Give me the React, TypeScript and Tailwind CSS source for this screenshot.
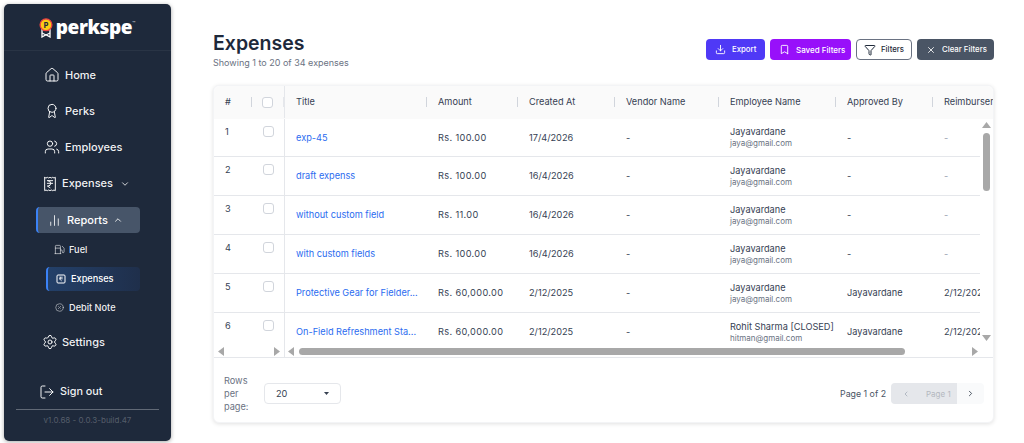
import React from 'react';
import {
  House,
  Award,
  Users,
  ReceiptIndianRupee,
  ChartNoAxesColumn,
  ChevronDown,
  ChevronUp,
  ChevronLeft,
  ChevronRight,
  Fuel,
  CirclePercent,
  Settings,
  LogOut,
  Download,
  Bookmark,
  Funnel,
  X,
} from 'lucide-react';

const rows = [
  { n: 1, title: 'exp-45', amount: 'Rs. 100.00', date: '17/4/2026', emp: 'Jayavardane', mail: 'jaya@gmail.com', by: '-', re: '-', h: 'h-[38px]' },
  { n: 2, title: 'draft expenss', amount: 'Rs. 100.00', date: '16/4/2026', emp: 'Jayavardane', mail: 'jaya@gmail.com', by: '-', re: '-', h: 'h-[39px]' },
  { n: 3, title: 'without custom field', amount: 'Rs. 11.00', date: '16/4/2026', emp: 'Jayavardane', mail: 'jaya@gmail.com', by: '-', re: '-', h: 'h-[39px]' },
  { n: 4, title: 'with custom fields', amount: 'Rs. 100.00', date: '16/4/2026', emp: 'Jayavardane', mail: 'jaya@gmail.com', by: '-', re: '-', h: 'h-[39px]' },
  { n: 5, title: 'Protective Gear for Fielder...', amount: 'Rs. 60,000.00', date: '2/12/2025', emp: 'Jayavardane', mail: 'jaya@gmail.com', by: 'Jayavardane', re: '2/12/2025', h: 'h-[39px]' },
  { n: 6, title: 'On-Field Refreshment Sta...', amount: 'Rs. 60,000.00', date: '2/12/2025', emp: 'Rohit Sharma [CLOSED]', mail: 'hitman@gmail.com', by: 'Jayavardane', re: '2/12/2025', h: 'h-[39px]' },
];

const heads = [
  { label: 'Title', w: 'w-[142px]' },
  { label: 'Amount', w: 'w-[91px]' },
  { label: 'Created At', w: 'w-[97px]' },
  { label: 'Vendor Name', w: 'w-[104px]' },
  { label: 'Employee Name', w: 'w-[117px]' },
  { label: 'Approved By', w: 'w-[97px]' },
  { label: 'Reimbursement', w: 'w-[120px]' },
];

function Logo() {
  return (
    <div className="flex items-center justify-center h-[47px] border-b border-white/5 pr-[1px]">
      <svg width="14" height="20" viewBox="0 0 14 20" className="mr-[3px] mt-[1px]">
        <path d="M3 11v8l4-2.200L11 19v-8z" fill="#1e293b" stroke="#fff" strokeWidth="1.300" />
        <path d="M3 15l4 2 4-2" fill="none" stroke="#fff" strokeWidth="1.100" />
        <circle cx="7" cy="6.800" r="5.900" fill="#facc15" stroke="#ef4444" strokeWidth="1.300" />
        <text x="7" y="9.500" textAnchor="middle" fontSize="7" fontWeight="800" fill="#1e293b" fontFamily="Inter, sans-serif">P</text>
      </svg>
      <span className="text-[19px] font-extrabold text-white tracking-[-0.4px] leading-none font-['Open_Sans',sans-serif]">perkspe</span>
      <span className="text-[5px] text-white/80 self-start mt-[17px] leading-none">™</span>
    </div>
  );
}

function NavItem({ icon, label, className }: { icon: React.ReactNode; label: string; className: string }) {
  return (
    <div className={`flex items-center text-[11px] font-medium text-white/95 ${className}`}>
      {icon}
      {label}
    </div>
  );
}

function Sidebar() {
  return (
    <aside className="w-[167px] h-[437px] shrink-0 m-[4px] rounded-[5px] bg-[#1e293b] shadow-[0_1px_4px_rgba(0,0,0,0.35)] flex flex-col">
      <Logo />
      <nav className="flex flex-col mt-[6px]">
        <NavItem className="h-[36px] pl-[40px] gap-[5px]" icon={<House size={16} strokeWidth={1.500} />} label="Home" />
        <NavItem className="h-[36px] pl-[40px] gap-[5px]" icon={<Award size={16} strokeWidth={1.500} />} label="Perks" />
        <NavItem className="h-[36px] pl-[40px] gap-[5px]" icon={<Users size={16} strokeWidth={1.500} />} label="Employees" />
        <div className="flex items-center h-[37px] pl-[38px] gap-[4px] text-[11px] font-medium text-white/95">
          <ReceiptIndianRupee size={16} strokeWidth={1.500} />
          Expenses
          <ChevronDown size={10} className="ml-[3px]" />
        </div>
        <div className="flex items-center h-[26px] ml-[32px] mr-[31px] mt-[5px] rounded-[4px] bg-[#475569] border-l-[2px] border-[#3b82f6] pl-[10px] text-[11px] font-medium text-white">
          <ChartNoAxesColumn size={13} strokeWidth={1.500} className="mr-[6px]" />
          Reports
          <ChevronUp size={10} className="ml-[5px]" />
        </div>
        <div className="flex items-center h-[29px] mt-[2px] pl-[50px] gap-[4px] text-[9.200px] font-medium text-white/95">
          <Fuel size={11} strokeWidth={1.300} />
          Fuel
        </div>
        <div className="flex items-center h-[24px] mt-[3px] mb-[2px] ml-[42px] mr-[31px] pl-[8px] gap-[5px] rounded-[4px] border-l-[2px] border-[#3b82f6] bg-gradient-to-r from-[#234069] to-[#1f2f4b] text-[9.200px] font-medium text-white">
          <svg width="10" height="10" viewBox="0 0 10 10" fill="none" stroke="currentColor" strokeWidth="1">
            <rect x="1" y="1" width="8" height="8" rx="1" />
            <path d="M3.200 3.200h3.600M3.200 4.800h3.600M4 3.200c1.600 0 1.600 1.600 0 1.600h-.600L5.800 7" strokeWidth="0.700" />
          </svg>
          Expenses
        </div>
        <div className="flex items-center h-[29px] pl-[51px] gap-[5px] text-[9.200px] font-medium text-white/95">
          <CirclePercent size={9} strokeWidth={1.300} />
          Debit Note
        </div>
        <NavItem className="h-[36px] mt-[2px] pl-[38px] gap-[4px]" icon={<Settings size={16} strokeWidth={1.500} />} label="Settings" />
      </nav>
      <div className="mt-auto px-[12px] pb-[15px]">
        <div className="flex items-center h-[26px] pl-[23px] gap-[5px] text-[10.800px] font-medium text-white/95">
          <LogOut size={16} strokeWidth={1.500} />
          Sign out
        </div>
        <div className="border-t border-white/30 mt-[4px] pt-[4px] text-center text-[8px] text-white/25">v1.0.68 - 0.0.3-build.47</div>
      </div>
    </aside>
  );
}

function Actions() {
  return (
    <div className="flex items-center gap-[5px] text-[7.800px] font-medium mt-[9px]">
      <button className="flex items-center h-[21px] w-[59px] pl-[9px] gap-[6px] rounded-[4px] bg-[#4f39f6] text-white">
        <Download size={11} />
        Export
      </button>
      <button className="flex items-center h-[21px] w-[81px] pl-[9px] gap-[6px] rounded-[4px] bg-[#9810fa] text-white">
        <Bookmark size={11} />
        <span className="text-[8px]">Saved Filters</span>
      </button>
      <button className="flex items-center h-[21px] w-[56px] pl-[7px] gap-[5px] rounded-[4px] border border-gray-500 bg-white text-gray-800">
        <Funnel size={12} />
        Filters
      </button>
      <button className="flex items-center h-[21px] w-[77px] pl-[9px] gap-[6px] rounded-[4px] bg-[#4a5565] text-white">
        <X size={10} />
        Clear Filters
      </button>
    </div>
  );
}

function Checkbox() {
  return <div className="w-[11px] h-[11px] rounded-[3px] border border-gray-300 bg-white" />;
}

function Arrow({ dir }: { dir: 'left' | 'right' | 'up' | 'down' }) {
  const paths = {
    left: 'M6 0v9L0 4.500z',
    right: 'M0 0v9l6-4.500z',
    up: 'M0 6h9L4.500 0z',
    down: 'M0 0h9L4.500 6z',
  };
  const box = dir === 'left' || dir === 'right' ? { w: 6, h: 9 } : { w: 9, h: 6 };
  return (
    <svg width={box.w} height={box.h} viewBox={`0 0 ${box.w} ${box.h}`} className="shrink-0">
      <path d={paths[dir]} fill="#a8a8a8" />
    </svg>
  );
}

function ExpenseTable() {
  return (
    <div className="relative h-[272px] overflow-hidden border-b border-gray-200 rounded-t-[6px] flex flex-col">
      {/* Header */}
      <div className="flex h-[33px] pb-[1px] shrink-0 bg-[#fafafa] text-[9.200px] text-gray-700">
        <div className="flex items-center w-[71px] shrink-0 border-r border-gray-200">
          <div className="w-[38px] pl-[11px] flex items-center h-[10px] border-r border-gray-300">#</div>
          <div className="w-[32px] flex items-center justify-center h-[10px] border-r border-gray-200">
            <Checkbox />
          </div>
        </div>
        <div className="flex items-center overflow-hidden">
          {heads.map((h, i) => (
            <div key={h.label} className={`${h.w} shrink-0 h-[10px] flex items-center pl-[11px] whitespace-nowrap ${i < heads.length - 1 ? 'border-r border-gray-300' : ''}`}>
              {h.label}
            </div>
          ))}
        </div>
      </div>

      {/* Rows */}
      <div className="flex-1 overflow-hidden pr-[13px]">
        {rows.map((r) => (
          <div key={r.n} className={`flex ${r.h} border-b border-gray-200 text-[9.200px] text-gray-700`}>
            <div className="flex w-[71px] shrink-0 border-r border-gray-200 pt-[6px]">
              <div className="w-[38px] pl-[11px]">{r.n}</div>
              <div className="w-[32px] flex justify-center pt-[1px]">
                <Checkbox />
              </div>
            </div>
            <div className="flex items-center">
              <div className="w-[142px] shrink-0 pl-[11px] whitespace-nowrap text-[#2b6cf0]">{r.title}</div>
              <div className="w-[91px] shrink-0 pl-[11px] whitespace-nowrap tracking-[0.35px]">{r.amount}</div>
              <div className="w-[97px] shrink-0 pl-[11px]">{r.date}</div>
              <div className="w-[104px] shrink-0 pl-[11px]">-</div>
              <div className="w-[117px] shrink-0 pl-[11px] whitespace-nowrap">
                <div className="leading-[12px]">{r.emp}</div>
                <div className="leading-[11px] text-[8px] text-gray-500">{r.mail}</div>
              </div>
              <div className="w-[97px] shrink-0 pl-[11px]">{r.by}</div>
              <div className={`w-[47px] shrink-0 pl-[11px] overflow-hidden whitespace-nowrap ${r.re === '-' ? 'text-gray-400' : ''}`}>{r.re}</div>
            </div>
          </div>
        ))}
      </div>

      {/* Vertical scrollbar */}
      <div className="absolute right-0 top-[33px] bottom-[13px] w-[13px] bg-white flex flex-col items-center pt-[3px] pb-[3px]">
        <Arrow dir="up" />
        <div className="w-[7px] h-[58px] rounded-full bg-[#a8a8a8] mt-[5px]" />
        <div className="mt-auto"><Arrow dir="down" /></div>
      </div>

      {/* Horizontal scrollbars */}
      <div className="absolute left-0 right-0 bottom-0 h-[11px] bg-white flex items-center">
        <div className="flex items-center justify-between w-[71px] px-[4px] border-r border-gray-200 h-full">
          <Arrow dir="left" />
          <Arrow dir="right" />
        </div>
        <div className="flex-1 flex items-center pl-[3px] pr-[15px]">
          <Arrow dir="left" />
          <div className="h-[7px] w-[606px] ml-[5px] rounded-full bg-[#a8a8a8]" />
          <div className="ml-auto"><Arrow dir="right" /></div>
        </div>
      </div>
    </div>
  );
}

function Pagination() {
  return (
    <div className="flex items-center justify-between h-[65px] pt-[6px] pl-[10px] pr-[9px] text-[9.200px] text-gray-600">
      <div className="flex items-center gap-[14px]">
        <div className="w-[26px] leading-[13px] text-gray-500">Rows per page:</div>
        <div className="flex items-center justify-between w-[77px] h-[21px] px-[11px] rounded-[4px] border border-gray-200 text-gray-700">
          20
          <svg width="5" height="3" viewBox="0 0 5 3"><path d="M0 0h5L2.500 3z" fill="#374151" /></svg>
        </div>
      </div>
      <div className="flex items-center gap-[5px]">
        <span className="text-[8.800px] text-gray-600">Page 1 of 2</span>
        <div className="flex items-center h-[21px] rounded-[4px] overflow-hidden">
          <div className="flex items-center w-[66px] h-full bg-gray-200 text-gray-400 pl-[11px] gap-[16px]">
            <ChevronLeft size={8} />
            <span className="text-[8px] whitespace-nowrap text-[#b4b8bf]">Page 1</span>
          </div>
          <div className="flex items-center justify-center w-[27px] h-full bg-gray-50 text-gray-800">
            <ChevronRight size={9} />
          </div>
        </div>
      </div>
    </div>
  );
}

export default function App() {
  return (
    <div className="flex w-[1024px] h-[443px] overflow-hidden bg-white font-['Inter',sans-serif]">
      <Sidebar />
      <main className="flex-1 pl-[38px] pr-[30px] pt-[30px] min-w-0">
        <div className="flex items-start justify-between h-[55px]">
          <div>
            <h1 className="text-[19.500px] leading-[24px] mt-[1px] font-semibold text-[#1e293b]">Expenses</h1>
            <p className="text-[9px] leading-[12px] mt-[2px] text-gray-500">Showing 1 to 20 of 34 expenses</p>
          </div>
          <Actions />
        </div>
        <div className="w-[781px] h-[338px] rounded-[6px] bg-white border border-gray-100 shadow-[0_1px_4px_rgba(0,0,0,0.12)]">
          <ExpenseTable />
          <Pagination />
        </div>
      </main>
    </div>
  );
}
